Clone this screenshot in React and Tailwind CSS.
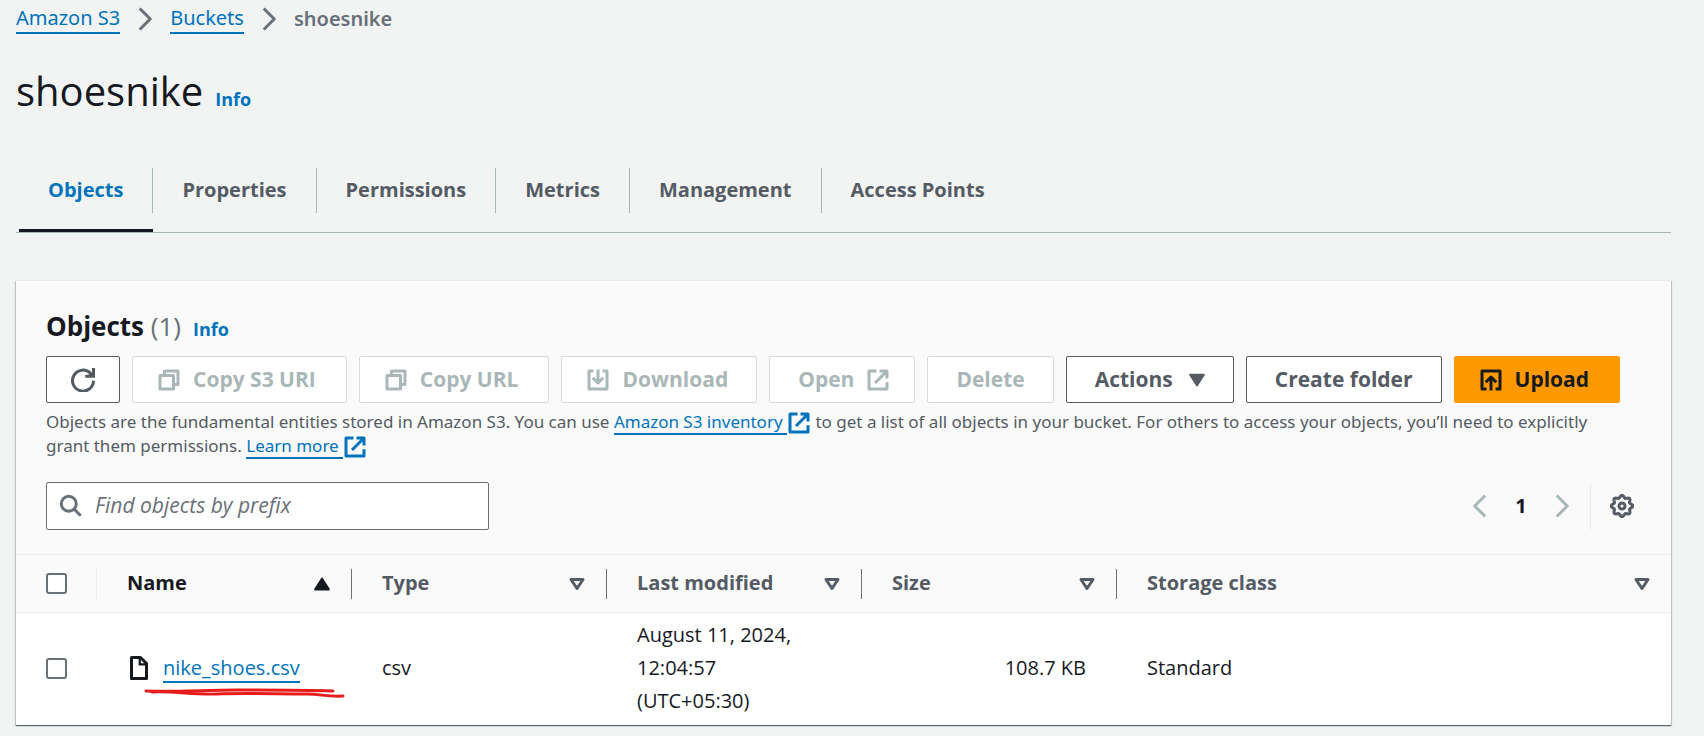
const TABS = ["Objects", "Properties", "Permissions", "Metrics", "Management", "Access Points"];

const COLUMNS = [
  { label: "Name", sorted: true },
  { label: "Type" },
  { label: "Last modified" },
  { label: "Size" },
  { label: "Storage class" },
];

const BUTTON_STYLES = {
  normal: "border-[#545b64] bg-white text-[#545b64] disabled:border-[#d5dbdb] disabled:text-[#aab7b8]",
  primary: "border-[#ff9900] bg-[#ff9900] text-[#16191f]",
};

function Icon({ className = "size-6", children }) {
  return (
    <svg
      viewBox="0 0 16 16"
      fill="none"
      stroke="currentColor"
      strokeWidth="2"
      className={`shrink-0 ${className}`}
      aria-hidden="true"
    >
      {children}
    </svg>
  );
}

function ChevronIcon({ className }) {
  return (
    <Icon className={className}>
      <path d="M4.500 1l7 7-7 7" strokeLinejoin="round" />
    </Icon>
  );
}

function RefreshIcon() {
  return (
    <Icon>
      <path d="M15 8.500A7 7 0 1 1 13 3.500l1 1" />
      <path d="M15 0v5.500H9.500" />
      <path d="M11 5l4-3v3z" fill="currentColor" stroke="none" />
    </Icon>
  );
}

function CopyIcon() {
  return (
    <Icon>
      <path d="M2 5h9v9H2zM5 5V2h9v9h-3" strokeLinejoin="round" />
    </Icon>
  );
}

function DownloadIcon() {
  return (
    <Icon>
      <path d="M5 2H2v12h12V2h-3M8 1v8.500M4.500 6.500L8 10l3.500-3.500" strokeLinejoin="round" />
    </Icon>
  );
}

function ExternalIcon({ className }) {
  return (
    <Icon className={className}>
      <path d="M7 2H2v12h12V9.500M9 2h5v5M14 2L6 10" strokeLinejoin="round" />
    </Icon>
  );
}

function UploadIcon() {
  return (
    <Icon>
      <path d="M5 14H2V2h12v12h-3M8 15V6M4.500 9.500L8 6l3.500 3.500" strokeLinejoin="round" />
    </Icon>
  );
}

function SearchIcon() {
  return (
    <Icon>
      <circle cx="6.500" cy="6.500" r="5" />
      <path d="M14.500 14.500L10 10" />
    </Icon>
  );
}

// Eight rounded teeth around the hub
const gearPoints = Array.from({ length: 96 }, (_, i) => {
  const a = (i / 96) * Math.PI * 2;
  const r = 6.3 + 0.8 * Math.cos(8 * a);
  return `${(8 + r * Math.cos(a)).toFixed(2)},${(8 + r * Math.sin(a)).toFixed(2)}`;
}).join(" ");

function GearIcon() {
  return (
    <Icon>
      <polygon points={gearPoints} />
      <circle cx="8" cy="8" r="2" />
    </Icon>
  );
}

function FileIcon() {
  return (
    <Icon>
      <path d="M3 1h6l4 4v10H3z" strokeLinejoin="round" />
      <path d="M8.500 1v4.500H13" strokeWidth="1.500" />
    </Icon>
  );
}

function CaretIcon({ up, filled }) {
  return (
    <Icon>
      {up && <path d="M3.500 11.500h9L8 4.500z" fill="currentColor" strokeWidth="1.500" strokeLinejoin="round" />}
      {!up && filled && <path d="M3.500 4.500h9L8 11.500z" fill="currentColor" strokeWidth="1.500" strokeLinejoin="round" />}
      {!up && !filled && <path d="M4 5h8l-4 6z" strokeLinejoin="round" />}
    </Icon>
  );
}

function Button({ variant = "normal", className = "px-7", children, ...props }) {
  return (
    <button
      type="button"
      className={`flex h-[47px] items-center justify-center gap-3 rounded-xs border text-[21px] font-bold ${BUTTON_STYLES[variant]} ${className}`}
      {...props}
    >
      {children}
    </button>
  );
}

function TextLink({ children }) {
  return (
    <a href="#" className="border-b-2 border-[#0073bb] text-[#0073bb]">
      {children}
    </a>
  );
}

function InfoLink() {
  return (
    <a href="#" className="text-lg leading-6 font-bold text-[#0073bb]">
      Info
    </a>
  );
}

function Checkbox({ label }) {
  return (
    <input
      type="checkbox"
      aria-label={label}
      className="block size-[21px] appearance-none rounded-[3px] border-2 border-[#687078] bg-white"
    />
  );
}

function ObjectsTable() {
  return (
    <table className="w-full table-fixed text-left">
      <colgroup>
        <col className="w-[81px]" />
        <col className="w-[255px]" />
        <col className="w-[255px]" />
        <col className="w-[255px]" />
        <col className="w-[255px]" />
        <col />
      </colgroup>
      <thead className="border-y border-[#eaeded] bg-[#fafafa]">
        <tr className="h-[58px]">
          <th className="p-0">
            <div className="flex h-[30px] items-center border-r border-[#eaeded] pl-[30px]">
              <Checkbox label="Select all objects" />
            </div>
          </th>
          {COLUMNS.map(({ label, sorted }, i) => (
            <th key={label} className="p-0 font-bold">
              <div
                className={`flex h-[30px] items-center justify-between pr-[17px] pl-[30px] ${i < COLUMNS.length - 1 ? "border-r border-[#687078]" : ""} ${sorted ? "text-[#16191f]" : "text-[#545b64]"}`}
              >
                <span className="pb-0.5">{label}</span>
                <CaretIcon up={sorted} />
              </div>
            </th>
          ))}
        </tr>
      </thead>
      <tbody>
        <tr className="h-[112px] leading-[33px]">
          <td className="pl-[30px]">
            <Checkbox label="Select nike_shoes.csv" />
          </td>
          <td className="pb-0.5 pl-[30px]">
            <div className="flex items-center gap-3">
              <FileIcon />
              <span className="relative">
                <TextLink>nike_shoes.csv</TextLink>
                <svg
                  viewBox="0 0 204 16"
                  fill="none"
                  stroke="#e81c1c"
                  strokeWidth="3"
                  strokeLinecap="round"
                  className="absolute top-full -left-5 h-4 w-[204px] max-w-none"
                  aria-hidden="true"
                >
                  <path d="M3 7c30 1 60-1 90-1s65 0 97 1" />
                  <path d="M9 8c25-1 40 3 65 2s60 0 90 0c14 0 20 3 36 2" />
                </svg>
              </span>
            </div>
          </td>
          <td className="pb-0.5 pl-[30px]">csv</td>
          <td className="pr-12 pb-0.5 pl-[30px]">August 11, 2024, 12:04:57 (UTC+05:30)</td>
          <td className="pr-[31px] pb-0.5 text-right">108.7 KB</td>
          <td className="pb-0.5 pl-[30px]">Standard</td>
        </tr>
      </tbody>
    </table>
  );
}

export default function App() {
  return (
    <div className="min-h-screen bg-[#f2f3f3] pr-[33px] pb-[11px] pl-4 font-['Open_Sans',sans-serif] text-[20px] text-[#16191f]">
      <nav
        aria-label="Breadcrumb"
        className="flex h-[38px] items-center gap-[13px] font-['Noto_Sans',sans-serif] leading-7 text-[#687078]"
      >
        <TextLink>Amazon S3</TextLink>
        <ChevronIcon />
        <TextLink>Buckets</TextLink>
        <ChevronIcon />
        <span className="font-semibold">shoesnike</span>
      </nav>

      <header className="mt-[23px] flex items-baseline gap-3">
        <h1 className="text-[40px] leading-[60px]">shoesnike</h1>
        <InfoLink />
      </header>

      <div role="tablist" className="mt-[31px] flex border-b border-[#aab7b8] pl-[3px]">
        {TABS.map((tab, i) => (
          <button
            key={tab}
            type="button"
            role="tab"
            aria-selected={i === 0}
            className={`border-b-3 pt-4 pb-4 font-bold ${i === 0 ? "border-[#16191f] text-[#0073bb]" : "border-transparent text-[#545b64]"}`}
          >
            <span
              className={`flex h-[45px] items-center px-[29px] pb-0.5 ${i < TABS.length - 1 ? "border-r border-[#aab7b8]" : ""}`}
            >
              {tab}
            </span>
          </button>
        ))}
      </div>

      <section className="mt-[47px] border-t border-[#eaeded] bg-white shadow-[0_1px_1px_rgba(0,28,36,0.5),1px_1px_1px_rgba(0,28,36,0.15),-1px_1px_1px_rgba(0,28,36,0.15)]">
        <div className="bg-[#fafafa] px-[30px] pt-[27px] pb-6">
          <div className="flex items-baseline gap-3">
            <h2 className="text-[26px] leading-9 font-bold">
              Objects <span className="font-normal text-[#687078]">(1)</span>
            </h2>
            <InfoLink />
          </div>

          <div className="mt-3 flex flex-wrap gap-3">
            <Button aria-label="Refresh" className="px-6">
              <RefreshIcon />
            </Button>
            <Button disabled className="pr-[30px] pl-6">
              <CopyIcon /> Copy S3 URI
            </Button>
            <Button disabled className="pr-[30px] pl-6">
              <CopyIcon /> Copy URL
            </Button>
            <Button disabled className="pr-7 pl-6">
              <DownloadIcon /> Download
            </Button>
            <Button disabled className="pr-6 pl-7">
              Open <ExternalIcon />
            </Button>
            <Button disabled>Delete</Button>
            <Button className="pr-6 pl-7">
              Actions <CaretIcon filled />
            </Button>
            <Button>Create folder</Button>
            <Button variant="primary" className="pr-[30px] pl-6">
              <UploadIcon /> Upload
            </Button>
          </div>

          <p className="mt-[7px] pr-3 font-['Noto_Sans',sans-serif] text-[17px] leading-6 text-[#545b64]">
            Objects are the fundamental entities stored in Amazon S3. You can use{" "}
            <TextLink>Amazon S3 inventory </TextLink>
            <ExternalIcon className="-my-1 inline size-6 text-[#0073bb]" /> to get a list of all objects in your bucket. For
            others to access your objects, you’ll need to explicitly grant them permissions.{" "}
            <TextLink>Learn more </TextLink>
            <ExternalIcon className="-my-1 inline size-6 text-[#0073bb]" />
          </p>

          <div className="mt-6 flex items-center justify-between">
            <label className="flex h-12 w-[443px] items-center gap-3 rounded-xs border border-[#687078] bg-white px-3 text-[#687078]">
              <SearchIcon />
              <input
                type="text"
                aria-label="Find objects by prefix"
                placeholder="Find objects by prefix"
                className="w-full text-[21px] outline-none placeholder:text-[#687078] placeholder:italic"
              />
            </label>

            <div className="mr-[7px] flex items-center">
              <button type="button" aria-label="Previous page" disabled className="text-[#aab7b8]">
                <ChevronIcon className="size-6 rotate-180" />
              </button>
              <button type="button" aria-current="page" className="w-[58px] font-bold">
                1
              </button>
              <button type="button" aria-label="Next page" disabled className="text-[#aab7b8]">
                <ChevronIcon />
              </button>
              <div className="ml-4 flex h-[47px] items-center border-l border-[#eaeded] pl-[19px] text-[#545b64]">
                <button type="button" aria-label="Preferences">
                  <GearIcon />
                </button>
              </div>
            </div>
          </div>
        </div>

        <ObjectsTable />
      </section>
    </div>
  );
}
